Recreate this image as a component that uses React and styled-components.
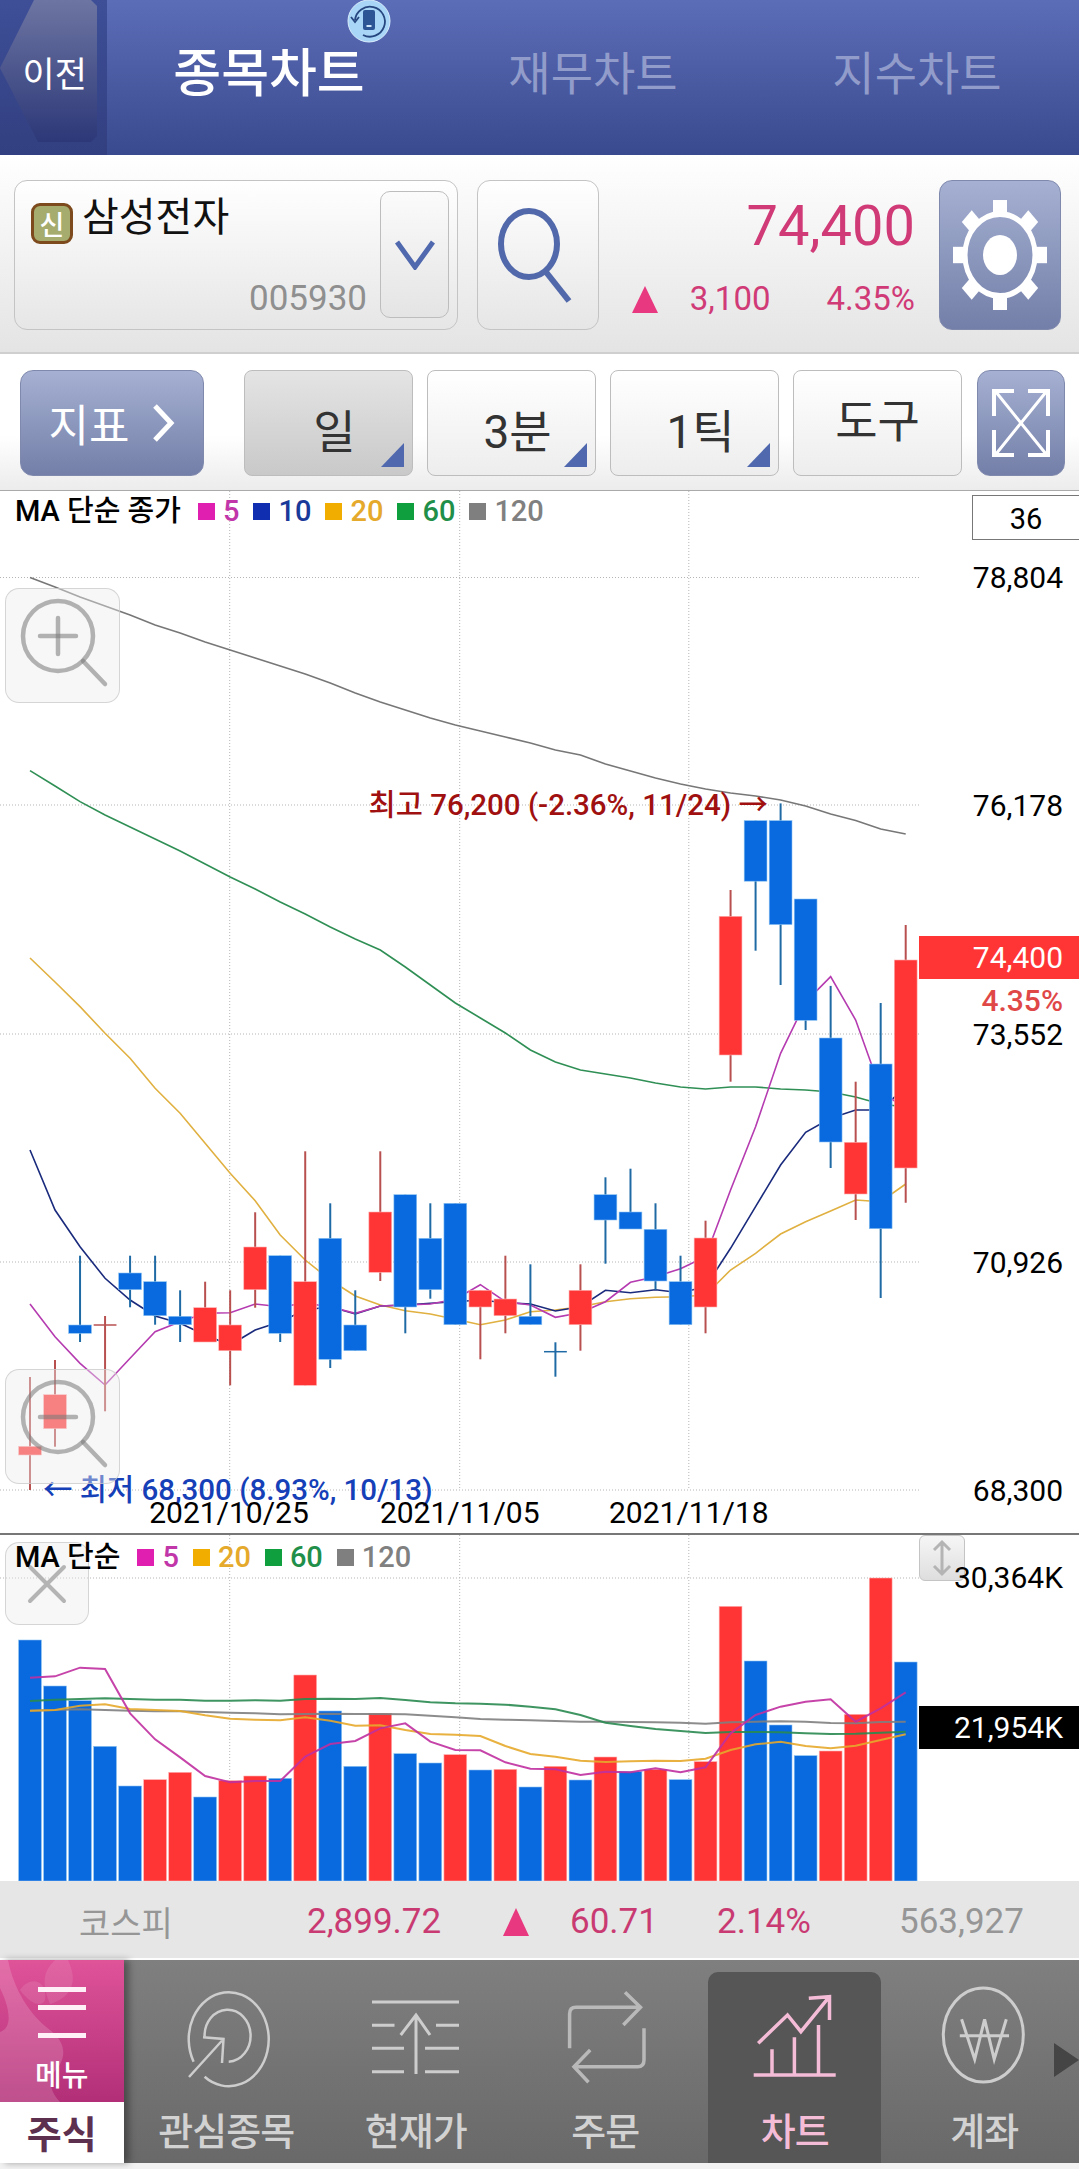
import React from 'react'
import styled, { createGlobalStyle } from 'styled-components'

const FONT = `Roboto, "Noto Sans CJK KR", sans-serif`
const KR = `"Noto Sans CJK KR", Roboto, sans-serif`

const GlobalStyle = createGlobalStyle`
  html, body { margin: 0; padding: 0; background: #fff; }
  body { font-family: ${FONT}; }
`

// chart geometry, in page pixels
const candleX = i => 30 + i * 25.02
const GRID_Y = [577.5, 805, 1034, 1262, 1490]
const GRID_X = [229.7, 459.7, 688.8]

// [wick top, body top, body bottom, wick bottom, rising]
const CANDLES = [
  [1377, 1446.3, 1455, 1490, 1], [1360, 1394.7, 1428.7, 1446.7, 1], [1255.7, 1325, 1333.3, 1342, 0],
  [1316, 1325, 1325, 1411.3, 1], [1255.7, 1273, 1289.7, 1307.3, 0], [1255.7, 1281.7, 1315.7, 1324.7, 0],
  [1290.3, 1316.3, 1324.7, 1342, 0], [1281.7, 1307.7, 1342, 1342, 1], [1290.3, 1325, 1350.7, 1385.3, 1],
  [1212.3, 1247, 1289.7, 1307.7, 1], [1255.7, 1255.7, 1333.3, 1342, 0], [1151.3, 1281.7, 1385.3, 1385.3, 1],
  [1203.3, 1238.3, 1359.3, 1368, 0], [1290.3, 1325, 1350.7, 1350.7, 0], [1151.3, 1212, 1272.3, 1281, 1],
  [1194.7, 1194.7, 1307, 1333.3, 0], [1203.3, 1238.3, 1289.7, 1298.7, 0], [1203.3, 1203.3, 1324.7, 1324.7, 0],
  [1290.3, 1290.3, 1307, 1359.3, 1], [1255.7, 1299, 1315.7, 1333.3, 1], [1264.3, 1316.3, 1324.7, 1324.7, 0],
  [1342.3, 1351.7, 1351.7, 1376.7, 0], [1264.3, 1290.3, 1324.7, 1350.7, 1], [1177.3, 1194.7, 1220, 1263.7, 0],
  [1168.7, 1212, 1229, 1229, 0], [1203.3, 1229.3, 1281, 1290, 0], [1255.7, 1281.7, 1324.7, 1324.7, 0],
  [1220.7, 1238, 1307, 1333.3, 1], [890, 916.3, 1055, 1081.7, 1], [820.6, 820.6, 881.2, 950.7, 0],
  [803.4, 820.6, 924.6, 985, 0], [899, 899, 1020.3, 1030, 0], [985.9, 1038, 1142, 1168, 0],
  [1081.7, 1142.3, 1194, 1220, 1], [1003, 1064, 1228.7, 1298, 0], [925, 960, 1168, 1202.7, 1],
]

const PRICE_MA = [
  { color: '#b53bb0', y: [1304, 1336.7, 1363.3, 1385, 1358.3, 1331.7, 1321.7, 1313.3, 1312.7, 1304, 1306.7, 1303.3, 1306.7, 1313.3, 1306, 1305, 1304, 1299.3, 1284.7, 1301.7, 1305, 1317.3, 1312.7, 1301.7, 1282.3, 1276.7, 1268.7, 1256.7, 1190, 1126.7, 1053.3, 1002, 976.6, 1020, 1090, 1110] },
  { color: '#1a2a7c', y: [1150, 1210, 1246.7, 1278.3, 1300, 1316, 1323.3, 1335, 1345, 1330, 1321.7, 1310, 1306.7, 1314, 1306, 1305, 1303.3, 1301.7, 1300, 1302.7, 1304, 1311, 1306.7, 1290.3, 1292.7, 1289.7, 1292.7, 1286.7, 1248.3, 1206.7, 1165, 1132.3, 1118.3, 1110, 1110, 1086.7] },
  { color: '#e0b040', y: [958, 982, 1006.6, 1033.3, 1058.3, 1088.3, 1113.3, 1143.3, 1173.3, 1200.7, 1235, 1260, 1280, 1296, 1305, 1310.7, 1314, 1319.3, 1324.7, 1320, 1311.7, 1310, 1306.7, 1301.7, 1298.7, 1297.3, 1296.7, 1295, 1270, 1253.3, 1234, 1221.7, 1211, 1200, 1201.7, 1184] },
  { color: '#2f8f55', y: [770.6, 786, 801.6, 815, 827, 839, 851, 864, 877, 889, 902, 914, 927, 939, 950, 967, 985, 1003, 1018, 1033, 1050, 1062, 1070, 1074, 1078, 1083, 1087, 1089, 1087, 1087, 1089, 1090, 1092, 1097, 1104, 1107] },
  { color: '#777777', y: [577.5, 587, 597, 606, 615, 625, 633, 642, 650, 658, 666, 674, 683, 693, 702, 710, 718, 725, 731, 737, 743, 750, 755, 764, 771, 778, 784, 789, 793, 796, 800, 806, 814, 820.6, 829, 834] },
]

// volume panel values are in thirds of a pixel below y=1500
const volY = v => 1500 + v / 3
const VOLUME = [
  [420, 0], [558, 0], [602, 0], [739, 0], [858, 0], [839, 1], [817, 1], [891, 0], [842, 1], [828, 1], [835, 0], [525, 1],
  [633, 0], [799, 0], [640, 1], [761, 0], [789, 0], [764, 1], [810, 0], [808, 1], [861, 0], [799, 1], [840, 0], [771, 1],
  [815, 0], [808, 1], [839, 0], [785, 1], [319, 1], [483, 0], [675, 0], [767, 0], [753, 1], [643, 1], [234, 1], [486, 0],
]
const VOLUME_MA = [
  { color: '#808080', y: [632, 630, 628, 630, 632, 634, 634, 636, 638, 640, 643, 642, 641, 642, 642, 643, 647, 652, 657, 659, 661, 663, 665, 665, 666, 667, 668, 671, 667, 665, 664, 665, 669, 670, 666, 665] },
  { color: '#2a8a50', y: [603, 599, 597, 595, 597, 599, 599, 602, 602, 601, 602, 597, 596, 597, 594, 600, 607, 610, 611, 614, 620, 628, 645, 668, 678, 687, 693, 699, 696, 696, 697, 700, 702, 701, 698, 695] },
  { color: '#e5a92b', y: [632, 630, 617, 613, 627, 630, 633, 646, 656, 659, 661, 652, 662, 677, 676, 690, 702, 704, 708, 738, 762, 770, 782, 786, 784, 782, 783, 776, 750, 733, 725, 738, 745, 737, 720, 703] },
  { color: '#c030a0', y: [533, 529, 503, 507, 640, 718, 772, 828, 847, 843, 843, 770, 732, 723, 685, 670, 725, 750, 751, 787, 806, 808, 825, 815, 817, 805, 817, 802, 700, 645, 620, 605, 598, 665, 625, 577] },
]

const toPoints = (ys, map = v => v) => ys.map((v, i) => `${candleX(i)},${map(v)}`).join(' ')

const Page = styled.div`
  width: 1079px;
  height: 2169px;
  overflow: hidden;
  background: #f2f2f2;
  font-family: ${FONT};
`

/* header */
const Header = styled.header`
  display: flex;
  height: 155px;
  position: relative;
  background: linear-gradient(#5c6db8, #3a4a8e);
`
const BackArea = styled.div`
  width: 107px;
  height: 155px;
  background: linear-gradient(#3e4f98, #323f80);
`
const BackButton = styled.div`
  width: 97px;
  height: 142px;
  display: flex;
  align-items: center;
  justify-content: flex-end;
  padding-right: 10px;
  box-sizing: border-box;
  clip-path: polygon(34px 0, 91px 0, 97px 6px, 97px 136px, 91px 142px, 38px 142px, 0 68px);
  background: linear-gradient(#6d75a2, #2c3878);
  color: #fff;
  font: 400 35px/1 ${KR};
`
const Tabs = styled.nav`
  flex: 1;
  display: grid;
  grid-template-columns: repeat(3, 1fr);
  padding-bottom: 15px;
`
const Tab = styled.div`
  display: flex;
  align-items: center;
  justify-content: center;
  color: ${p => (p.$active ? '#fff' : '#929cca')};
  font: ${p => (p.$active ? '500 52px' : '400 46px')}/1 ${KR};
`
const RotateBadge = styled.svg`
  position: absolute;
  left: 347px;
  top: 0;
`

/* stock info */
const InfoBar = styled.section`
  display: flex;
  height: 199px;
  box-sizing: border-box;
  padding: 25px 0 0 14px;
  background: linear-gradient(#fff, #e4e4e4);
  border-bottom: 2px solid #cfcfcf;
`
const NameBox = styled.div`
  position: relative;
  display: flex;
  align-items: flex-start;
  gap: 12px;
  width: 444px;
  height: 150px;
  box-sizing: border-box;
  padding: 22px 0 0 16px;
  border: 1.5px solid #c4c4c4;
  border-radius: 13px;
  background: linear-gradient(#fff, #e6e6e6);
`
const Badge = styled.span`
  width: 42px;
  height: 41px;
  box-sizing: border-box;
  display: flex;
  align-items: center;
  justify-content: center;
  border: 3px solid #7c4a1c;
  border-radius: 9px;
  background: #a5ac6e;
  color: #fff;
  font: 500 27px/1 ${KR};
`
const StockName = styled.span`
  margin-top: -12px;
  margin-left: -3px;
  color: #111;
  font: 400 40px/1.15 ${KR};
`
const StockCode = styled.span`
  position: absolute;
  right: 90px;
  bottom: 13px;
  color: #8f8f8f;
  font: 400 35px/1 ${FONT};
`
const DropButton = styled.div`
  position: absolute;
  right: 8px;
  top: 10px;
  width: 69px;
  height: 127px;
  box-sizing: border-box;
  display: flex;
  align-items: center;
  justify-content: center;
  border: 1.5px solid #bdbdbd;
  border-radius: 10px;
  background: linear-gradient(#fbfbfb, #e4e4e4);
`
const SearchButton = styled.div`
  width: 122px;
  height: 150px;
  margin-left: 19px;
  box-sizing: border-box;
  display: flex;
  align-items: center;
  justify-content: center;
  border: 1.5px solid #c4c4c4;
  border-radius: 13px;
  background: linear-gradient(#fff, #e6e6e6);
`
const PriceBlock = styled.div`
  width: 316px;
  display: flex;
  flex-direction: column;
  align-items: flex-end;
  color: #d03a76;
`
const Price = styled.div`
  margin-top: 20px;
  font: 400 56px/52px ${FONT};
`
const ChangeRow = styled.div`
  display: flex;
  align-items: center;
  margin-top: 29px;
  font: 400 33px/36px ${FONT};
  span + span { margin-left: 56px; }
`
const UpTriangle = styled.i`
  display: block;
  width: 0;
  height: 0;
  margin-right: ${p => p.$gap}px;
  border-left: ${p => p.$w / 2}px solid transparent;
  border-right: ${p => p.$w / 2}px solid transparent;
  border-bottom: ${p => p.$h}px solid #e8387f;
`
const BlueButton = styled.div`
  width: ${p => p.$w}px;
  height: ${p => p.$h}px;
  margin-left: ${p => p.$ml}px;
  box-sizing: border-box;
  display: flex;
  align-items: center;
  justify-content: center;
  gap: 22px;
  border: 1px solid #7f89ad;
  border-radius: 13px;
  background: linear-gradient(#a5b0d2, #747fa9);
  color: #fff;
  font: 400 44px/1 ${KR};
`

/* period toolbar */
const Toolbar = styled.section`
  display: flex;
  height: 136px;
  box-sizing: border-box;
  padding: 16px 0 0 20px;
  background: linear-gradient(#fff 60%, #ececec);
`
const PeriodButton = styled.div`
  position: relative;
  width: 169px;
  height: 106px;
  margin-left: ${p => p.$ml}px;
  box-sizing: border-box;
  display: flex;
  align-items: center;
  justify-content: center;
  padding: ${p => (p.$corner ? '17px 0 0 12px' : '0 0 4px')};
  border: 1.5px solid #bdbdbd;
  border-radius: 8px;
  background: ${p => (p.$active ? 'linear-gradient(#e4e4e4, #c9c9c9)' : 'linear-gradient(#fff, #ededed)')};
  color: #333;
  font: 400 46px/1 ${FONT};
`
const Corner = styled.i`
  position: absolute;
  right: 8px;
  bottom: 8px;
  width: 0;
  height: 0;
  border-left: 23px solid transparent;
  border-bottom: 24px solid #4f68ae;
`

/* charts */
const PricePanel = styled.section`
  position: relative;
  height: 1045px;
  box-sizing: border-box;
  background: #fff;
  border-top: 1.5px solid #aaa;
  border-bottom: 2px solid #777;
`
const VolumePanel = styled.section`
  position: relative;
  height: 346px;
  background: #fff;
`
const ChartSvg = styled.svg`
  display: block;
  position: absolute;
  left: 0;
  top: 0;
`
const AxisText = styled.text`
  font: 400 30px ${FONT};
  fill: #000;
  text-anchor: ${p => p.$anchor || 'end'};
  dominant-baseline: central;
`
const NoteText = styled.text`
  font: 500 29.5px ${FONT};
  fill: ${p => p.$fill};
  text-anchor: ${p => p.$anchor};
  dominant-baseline: central;
`
const Legend = styled.div`
  position: absolute;
  left: 15px;
  top: ${p => p.$top}px;
  display: flex;
  align-items: center;
  font: 500 29px/30px ${FONT};
  color: #000;
  white-space: nowrap;
`
const LegendTitle = styled.span`
  margin-right: 17px;
`
const LegendItem = styled.span`
  display: flex;
  align-items: center;
  gap: 8px;
  margin-right: 14px;
  color: ${p => p.$text};
  &::before {
    content: '';
    width: 17px;
    height: 17px;
    background: ${p => p.$square};
  }
`
const CountBox = styled.div`
  position: absolute;
  left: 972px;
  top: 4px;
  width: 107px;
  height: 45px;
  box-sizing: border-box;
  display: flex;
  align-items: center;
  justify-content: center;
  padding-top: 3px;
  border: 1.5px solid #777;
  border-right: 0;
  background: #fff;
  font: 400 29px/1 ${FONT};
`
const GlassButton = styled.div`
  position: absolute;
  left: 5px;
  top: ${p => p.$top}px;
  width: ${p => p.$w}px;
  height: ${p => p.$h}px;
  box-sizing: border-box;
  border: 1.5px solid rgba(200, 200, 200, 0.7);
  border-radius: 14px;
  background: rgba(235, 235, 235, 0.42);
`
const CloseIcon = styled.svg`
  position: absolute;
  left: 27px;
  top: 29px;
`
const ResizeButton = styled.div`
  position: absolute;
  left: 919px;
  top: 0;
  width: 46px;
  height: 46px;
  box-sizing: border-box;
  display: flex;
  align-items: center;
  justify-content: center;
  border: 1px solid #c4c4c4;
  border-radius: 6px;
  background: linear-gradient(#f6f6f6, #dedede);
`
const PriceTag = styled.div`
  position: absolute;
  left: 919px;
  top: ${p => p.$top}px;
  width: 160px;
  height: ${p => p.$h}px;
  box-sizing: border-box;
  display: flex;
  align-items: center;
  justify-content: flex-end;
  padding-right: 16px;
  background: ${p => p.$bg || 'transparent'};
  color: ${p => p.$color || '#fff'};
  font: ${p => p.$weight || 400} 30px/1 ${FONT};
`

/* index strip */
const IndexBar = styled.section`
  display: grid;
  grid-template-columns: 228px 196px 67px 147px 182px auto;
  align-items: center;
  height: 77px;
  box-sizing: border-box;
  padding: 4px 0 0 79px;
  background: #e6e6e6;
`
const IndexCell = styled.span`
  color: ${p => (p.$up ? '#c93a72' : '#969696')};
  font: 400 ${p => p.$size || 35}px/1 ${p => (p.$kr ? KR : FONT)};
`

/* bottom navigation */
const BottomNav = styled.nav`
  position: relative;
  display: flex;
  height: 205px;
  background: linear-gradient(#7f7f7f, #696969);
  border-top: 2px solid #fdfdfd;
  box-sizing: border-box;
`
const MenuColumn = styled.div`
  width: 125px;
  display: flex;
  flex-direction: column;
  position: relative;
  box-shadow: 5px 0 7px rgba(0, 0, 0, 0.35);
`
const MenuButton = styled.div`
  position: relative;
  height: 142px;
  display: flex;
  flex-direction: column;
  align-items: center;
  overflow: hidden;
  background: linear-gradient(#df5399, #b22f78);
  color: #fff;
  font: 500 29px/1 ${KR};
`
const Swirl = styled.svg`
  position: absolute;
  left: 0;
  top: 0;
`
const MenuLines = styled.div`
  position: relative;
  width: 48px;
  height: 41px;
  margin-top: 27px;
  border-top: 5px solid #fff0f8;
  border-bottom: 5px solid #fff0f8;
  &::before {
    content: '';
    position: absolute;
    left: 0;
    right: 0;
    top: 13px;
    height: 5px;
    background: #fff0f8;
  }
`
const MenuText = styled.span`
  position: relative;
  margin-top: 21px;
`
const StockTab = styled.div`
  height: 61px;
  display: flex;
  align-items: center;
  justify-content: center;
  padding-bottom: 2px;
  box-sizing: border-box;
  background: #fff;
  color: #5e3050;
  font: 700 38px/1 ${KR};
`
const NavItems = styled.div`
  display: grid;
  grid-template-columns: repeat(5, 189.5px);
  padding-left: 8px;
  justify-items: center;
`
const NavItem = styled.div`
  width: 173px;
  margin-top: 12px;
  padding-top: 13px;
  box-sizing: border-box;
  display: flex;
  flex-direction: column;
  align-items: center;
  border-radius: 10px 10px 0 0;
  background: ${p => (p.$active ? '#565656' : 'transparent')};
  color: ${p => (p.$active ? '#f5bcd8' : '#d2d2d2')};
  font: 500 38px/40px ${KR};
  letter-spacing: -1px;
`
const NavLabel = styled.span`
  margin-top: 14px;
`
const MoreArrow = styled.i`
  position: absolute;
  right: 0;
  top: 83px;
  width: 0;
  height: 0;
  border-top: 17px solid transparent;
  border-bottom: 17px solid transparent;
  border-left: 25px solid #454545;
`

const IconSvg = ({ stroke, width = 2.5, children }) => (
  <svg width="140" height="110" viewBox="0 0 140 110" fill="none" stroke={stroke} strokeWidth={width}>
    {children}
  </svg>
)

const NAV = [
  {
    label: '관심종목',
    icon: (
      <IconSvg stroke="#cdcdcd">
        <path d="M37.6 76.7A40 47 0 1 1 48.6 91.7" />
        <path d="M72.7 76.7A23 26 0 1 0 48.6 51.7" />
        <path d="M33 92L67.5 54M47 52.3L67.5 54L66 78" />
      </IconSvg>
    ),
  },
  {
    label: '현재가',
    icon: (
      <IconSvg stroke="#cdcdcd" width={3}>
        <path d="M26 17H113M26 40.3H48.5M90 40.3H113M26 63.3H58M79 63.3H113M26 86.7H58M79 86.7H113" />
        <path d="M70 30V89M54.7 50L70 30L84 50" />
      </IconSvg>
    ),
  },
  {
    label: '주문',
    icon: (
      <IconSvg stroke="#b9b9b9" width={3.5}>
        <path d="M34.6 63.3V29Q34.6 22.3 41 22.3H105M90 7.3L105.5 22.3L88.3 40" />
        <path d="M109 43.3V75Q109 81.7 102.7 81.7H39.5M55.2 65L39 81.7L53.5 97.3" />
      </IconSvg>
    ),
  },
  {
    label: '차트',
    active: true,
    icon: (
      <IconSvg stroke="#f5bcd8" width={3.5}>
        <path d="M28.7 90H110.7M47 64.3V90M69.4 52.3V90M93.5 40V90" />
        <path d="M33.2 58.3L62.5 30L75.9 46.7L103.8 12.3M83.8 13.3L104.5 11.7V35" />
      </IconSvg>
    ),
  },
  {
    label: '계좌',
    icon: (
      <IconSvg stroke="#cdcdcd" width={3}>
        <ellipse cx="69.3" cy="50" rx="40" ry="47" />
        <path d="M47.6 34.3L60.7 74.3L70.6 34.3L80.2 74.3L92.3 34.3M45.8 50.7H95" />
      </IconSvg>
    ),
  },
]

const GEAR_TEETH = [0, 45, 90, 135, 180, 225, 270, 315]

const Candles = () =>
  CANDLES.map(([wt, bt, bb, wb, up], i) => {
    const x = candleX(i)
    const body = up ? '#ff3535' : '#0969df'
    const wick = up ? '#b85050' : '#1f6aa5'
    return (
      <g key={i}>
        <line x1={x} x2={x} y1={wt} y2={wb} stroke={wick} strokeWidth="2" />
        {bb === bt ? (
          <line x1={x - 11.4} x2={x + 11.4} y1={bt} y2={bt} stroke={wick} strokeWidth="1.5" />
        ) : (
          <rect x={x - 11.4} y={bt} width="22.8" height={bb - bt} fill={body} stroke={up ? '#ffb0b0' : '#8cc4f0'} strokeWidth="0.6" />
        )}
      </g>
    )
  })

const MagnifierGlass = ({ plus }) => (
  <svg width="115" height="115" viewBox="0 0 115 115" fill="none" stroke="rgba(120,120,120,0.55)" strokeWidth="4.5" strokeLinecap="round">
    <circle cx="52" cy="47" r="35" />
    <path d="M77 72L99 95M34 47H70" />
    {plus && <path d="M52 29V65" />}
  </svg>
)

const App = () => (
  <Page>
    <GlobalStyle />
    <Header>
      <BackArea>
        <BackButton>이전</BackButton>
      </BackArea>
      <Tabs>
        <Tab $active>종목차트</Tab>
        <Tab>재무차트</Tab>
        <Tab>지수차트</Tab>
      </Tabs>
      <RotateBadge width="44" height="44" viewBox="0 0 44 44">
        <circle cx="22" cy="21" r="21" fill="#a9d5f6" stroke="#d7ecfb" strokeWidth="1" />
        <path d="M8 20A15 15 0 1 1 16 35" fill="none" stroke="#26477f" strokeWidth="1.8" />
        <path d="M4 17L8 22L12 17" fill="none" stroke="#26477f" strokeWidth="1.8" />
        <rect x="16" y="10" width="12" height="20" rx="2" fill="#2b5595" />
        <rect x="19.5" y="25" width="5" height="2" fill="#cfe6fa" />
      </RotateBadge>
    </Header>

    <InfoBar>
      <NameBox>
        <Badge>신</Badge>
        <StockName>삼성전자</StockName>
        <StockCode>005930</StockCode>
        <DropButton>
          <svg width="40" height="30" viewBox="0 0 40 30" fill="none" stroke="#4f68ae" strokeWidth="5">
            <path d="M2 2L20 27L38 2" />
          </svg>
        </DropButton>
      </NameBox>
      <SearchButton>
        <svg width="90" height="100" viewBox="0 0 90 100" fill="none" stroke="#5169ab" strokeWidth="6">
          <ellipse cx="36" cy="39" rx="28" ry="33" />
          <path d="M53 67L76 96" />
        </svg>
      </SearchButton>
      <PriceBlock>
        <Price>74,400</Price>
        <ChangeRow>
          <UpTriangle $w={26} $h={27} $gap={32} />
          <span>3,100</span>
          <span>4.35%</span>
        </ChangeRow>
      </PriceBlock>
      <BlueButton $w={122} $h={150} $ml={24}>
        <svg width="100" height="120" viewBox="0 0 100 120">
          <g transform="translate(50 60) scale(1 1.17)" fill="#fff">
            {GEAR_TEETH.map(a => (
              <rect key={a} x="-7" y="-47" width="14" height="14" transform={`rotate(${a})`} />
            ))}
            <circle r="35" fill="none" stroke="#fff" strokeWidth="5" />
            <circle r="17" />
          </g>
        </svg>
      </BlueButton>
    </InfoBar>

    <Toolbar>
      <BlueButton $w={184} $h={106} $ml={0}>
        <span>지표</span>
        <svg width="24" height="38" viewBox="0 0 24 38" fill="none" stroke="#fff" strokeWidth="5">
          <path d="M4 2L20 19L4 36" />
        </svg>
      </BlueButton>
      <PeriodButton $ml={40} $active $corner>일<Corner /></PeriodButton>
      <PeriodButton $ml={14} $corner>3분<Corner /></PeriodButton>
      <PeriodButton $ml={14} $corner>1틱<Corner /></PeriodButton>
      <PeriodButton $ml={14}>도구</PeriodButton>
      <BlueButton $w={88} $h={106} $ml={15}>
        <svg width="60" height="72" viewBox="0 0 60 72" fill="none" stroke="#fff" strokeWidth="4">
          <path d="M5 5L55 67M55 5L5 67" strokeWidth="3" />
          <path d="M23 4H3V29M37 4H57V29M23 68H3V43M37 68H57V43" />
        </svg>
      </BlueButton>
    </Toolbar>

    <PricePanel>
      <ChartSvg width="1079" height="1041" viewBox="0 491 1079 1041">
        {GRID_Y.map(y => (
          <line key={y} x1="0" x2="919" y1={y} y2={y} stroke="#b5b5b5" strokeDasharray="1 2" />
        ))}
        {GRID_X.map(x => (
          <line key={x} x1={x} x2={x} y1="491" y2="1490" stroke="#b5b5b5" strokeDasharray="1 2" />
        ))}
        {[...PRICE_MA].reverse().map(m => (
          <polyline key={m.color} points={toPoints(m.y)} fill="none" stroke={m.color} strokeWidth="1.6" />
        ))}
        <Candles />
        <NoteText x="768" y="805" $fill="#a01010" $anchor="end">최고 76,200 (-2.36%, 11/24) →</NoteText>
        <NoteText x="43" y="1490" $fill="#1540b8" $anchor="start">← 최저 68,300 (8.93%, 10/13)</NoteText>
        <AxisText x="1063" y="577">78,804</AxisText>
        <AxisText x="1063" y="805">76,178</AxisText>
        <AxisText x="1063" y="1034">73,552</AxisText>
        <AxisText x="1063" y="1262">70,926</AxisText>
        <AxisText x="1063" y="1490">68,300</AxisText>
        <AxisText x="229" y="1512" $anchor="middle">2021/10/25</AxisText>
        <AxisText x="459.7" y="1512" $anchor="middle">2021/11/05</AxisText>
        <AxisText x="688.8" y="1512" $anchor="middle">2021/11/18</AxisText>
      </ChartSvg>
      <Legend $top={5}>
        <LegendTitle>MA 단순 종가</LegendTitle>
        <LegendItem $square="#e01fb0" $text="#c136a8">5</LegendItem>
        <LegendItem $square="#0f2fb0" $text="#1a3a9a">10</LegendItem>
        <LegendItem $square="#f2ae00" $text="#e5a92b">20</LegendItem>
        <LegendItem $square="#0f9f3f" $text="#1f8f4a">60</LegendItem>
        <LegendItem $square="#7f7f7f" $text="#808080">120</LegendItem>
      </Legend>
      <CountBox>36</CountBox>
      <GlassButton $top={97} $w={115} $h={115}><MagnifierGlass plus /></GlassButton>
      <GlassButton $top={878} $w={115} $h={115}><MagnifierGlass /></GlassButton>
      <PriceTag $top={445} $h={43} $bg="#ff3535">74,400</PriceTag>
      <PriceTag $top={489} $h={42} $color="#e04848" $weight={500}>4.35%</PriceTag>
    </PricePanel>

    <VolumePanel>
      <ChartSvg width="1079" height="346" viewBox="0 1535 1079 346">
        <line x1="0" x2="919" y1="1578" y2="1578" stroke="#b5b5b5" strokeDasharray="1 2" />
        {GRID_X.map(x => (
          <line key={x} x1={x} x2={x} y1="1535" y2="1881" stroke="#b5b5b5" strokeDasharray="1 2" />
        ))}
        {VOLUME.map(([top, up], i) => (
          <rect
            key={i}
            x={candleX(i) - 11.4}
            y={volY(top)}
            width="22.8"
            height={1881 - volY(top)}
            fill={up ? '#ff3535' : '#0969df'}
            stroke={up ? '#ffb0b0' : '#8cc4f0'}
            strokeWidth="0.6"
          />
        ))}
        {VOLUME_MA.map(m => (
          <polyline key={m.color} points={toPoints(m.y, volY)} fill="none" stroke={m.color} strokeWidth="2" opacity="0.9" />
        ))}
      </ChartSvg>
      <GlassButton $top={7} $w={84} $h={83} />
      <CloseIcon width="40" height="40" viewBox="0 0 40 40" stroke="#b4b4b4" strokeWidth="4" strokeLinecap="round">
        <path d="M3 37L37 3M3 3L37 37" />
      </CloseIcon>
      <Legend $top={7}>
        <LegendTitle>MA 단순</LegendTitle>
        <LegendItem $square="#e01fb0" $text="#c136a8">5</LegendItem>
        <LegendItem $square="#f2ae00" $text="#e5a92b">20</LegendItem>
        <LegendItem $square="#0f9f3f" $text="#1f8f4a">60</LegendItem>
        <LegendItem $square="#7f7f7f" $text="#808080">120</LegendItem>
      </Legend>
      <ResizeButton>
        <svg width="20" height="38" viewBox="0 0 20 38" fill="none" stroke="#b4b4b4" strokeWidth="3">
          <path d="M10 3V35M2 11L10 3L18 11M2 27L10 35L18 27" />
        </svg>
      </ResizeButton>
      <PriceTag $top={21} $h={43} $color="#000">30,364K</PriceTag>
      <PriceTag $top={171} $h={43} $bg="#000">21,954K</PriceTag>
    </VolumePanel>

    <IndexBar>
      <IndexCell $kr $size={34}>코스피</IndexCell>
      <IndexCell $up>2,899.72</IndexCell>
      <UpTriangle $w={26} $h={28} $gap={0} />
      <IndexCell $up>60.71</IndexCell>
      <IndexCell $up>2.14%</IndexCell>
      <IndexCell>563,927</IndexCell>
    </IndexBar>

    <BottomNav>
      <MenuColumn>
        <MenuButton>
          <Swirl width="125" height="142" viewBox="0 0 125 142" fill="#fff">
            <path opacity="0.16" d="M8 0C14 30 30 55 50 70C68 84 66 100 54 112C48 120 50 132 60 142H0V72C16 66 6 40 0 28V0Z" />
            <path opacity="0.1" d="M20 30C30 15 48 20 45 40C42 48 30 44 20 30Z" />
            <path opacity="0.1" d="M55 0H68C82 30 62 40 50 44C40 20 45 10 55 0Z" />
          </Swirl>
          <MenuLines />
          <MenuText>메뉴</MenuText>
        </MenuButton>
        <StockTab>주식</StockTab>
      </MenuColumn>
      <NavItems>
        {NAV.map(n => (
          <NavItem key={n.label} $active={n.active}>
            {n.icon}
            <NavLabel>{n.label}</NavLabel>
          </NavItem>
        ))}
      </NavItems>
      <MoreArrow />
    </BottomNav>
  </Page>
)

export default App
